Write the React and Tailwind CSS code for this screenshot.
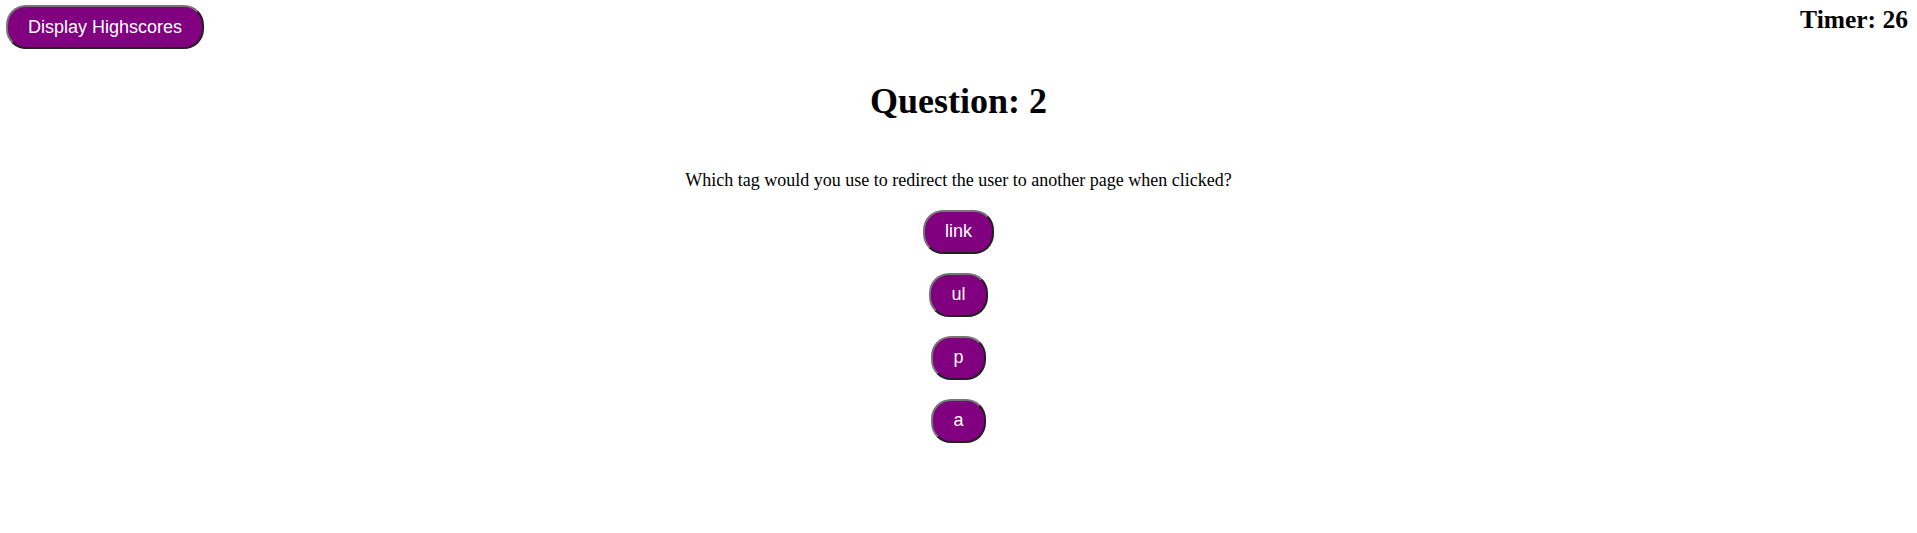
export default function App() {
  const btn =
    "bg-[#800080] text-white text-[18px] leading-[normal] px-[20px] py-[9.5px] rounded-[20px] border-2 [border-style:outset] border-[#767676] [font-family:'Liberation_Sans',Arial,sans-serif]";
  return (
    <div className="min-h-screen bg-white text-black leading-[normal] [font-family:'Liberation_Serif','Times_New_Roman',serif]">
      <div className="flex justify-between items-start">
        <button className={`${btn} mt-[5px] ml-[6px]`}>Display Highscores</button>
        <h2 className="pt-[5px] pr-[9px] text-[25.5px] font-bold leading-[normal]">Timer: 26</h2>
      </div>
      <h1 className="mt-[30.5px] text-center text-[36px] font-bold leading-[normal]">Question: 2</h1>
      <p className="mt-[48px] text-center text-[18px] leading-[normal]">
        Which tag would you use to redirect the user to another page when clicked?
      </p>
      <div className="mt-[19px] flex flex-col items-center gap-[19px]">
        <button className={btn}>link</button>
        <button className={btn}>ul</button>
        <button className={btn}>p</button>
        <button className={btn}>a</button>
      </div>
    </div>
  );
}
